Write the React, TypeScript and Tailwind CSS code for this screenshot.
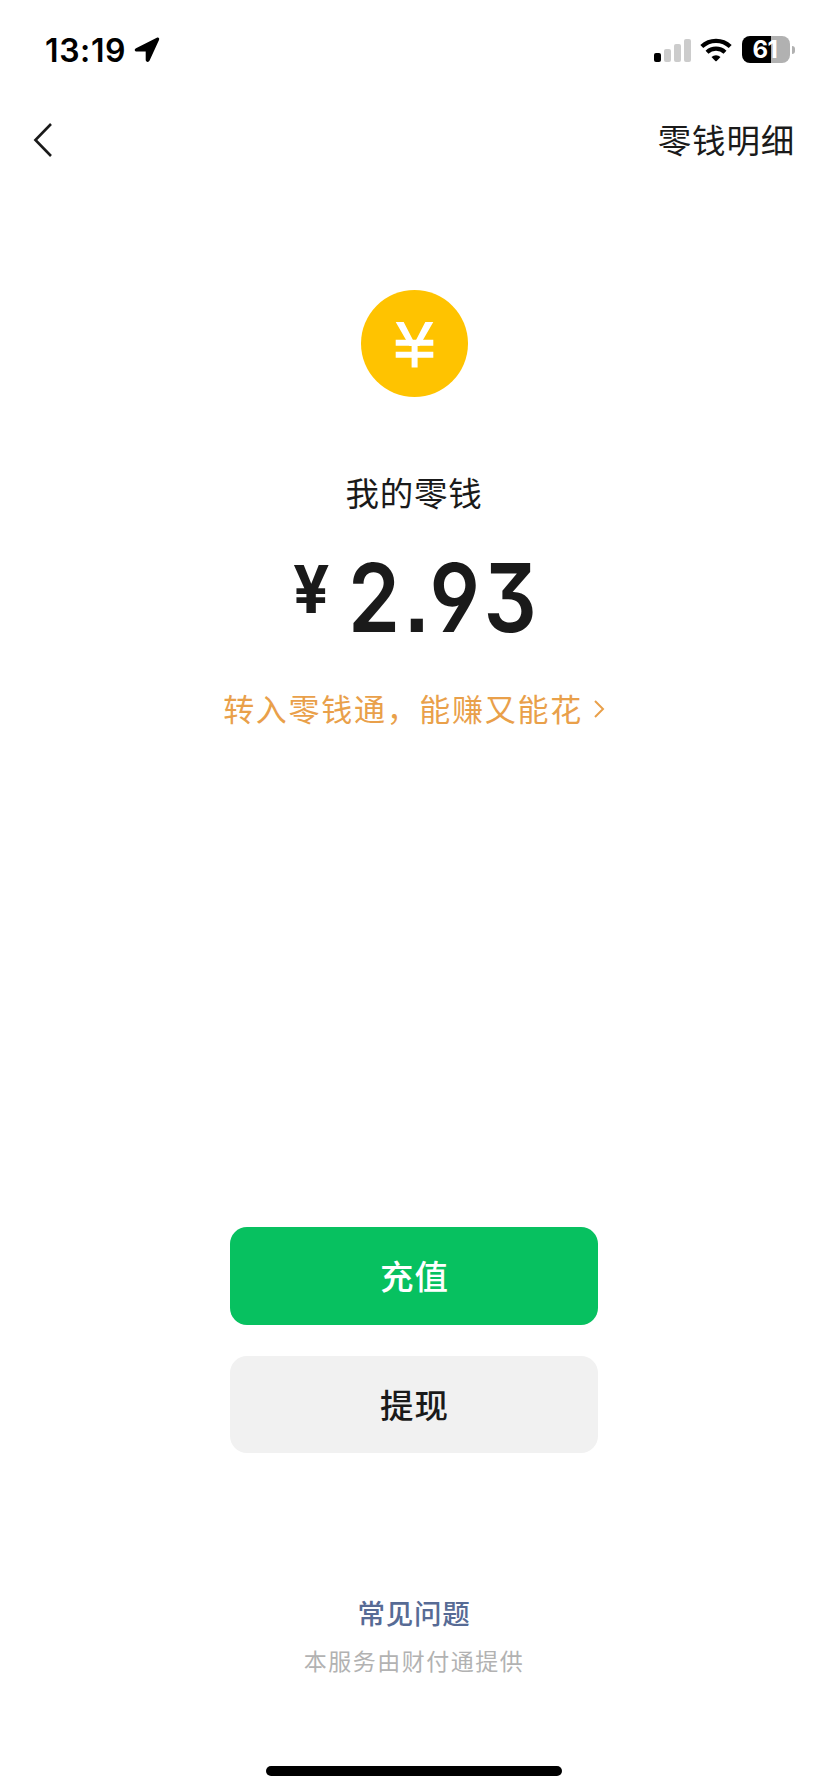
import React from 'react';

function LocationIcon() {
  return (
    <svg width="26" height="26" viewBox="0 0 26 26" className="ml-[8px]">
      <path
        d="M2 11.2 22.8 0.8 C24.5 0 25.8 1.2 25 3 L15.6 23.6 C14.7 25.6 11.7 25.2 11.7 22.8 V14.6 H3 C0.4 14.6 0 12.2 2 11.2 Z"
        fill="black"
      />
    </svg>
  );
}

function WifiIcon() {
  return (
    <svg width="32" height="24" viewBox="0 0 32 24" className="ml-[9px]">
      <g fill="none" stroke="black" strokeWidth="4.2">
        <path d="M1.8 8.6 A20.4 20.4 0 0 1 30.2 8.6" />
        <path d="M7 14.3 A13 13 0 0 1 25 14.3" />
      </g>
      <path d="M11.5 19 A6.6 6.6 0 0 1 20.5 19 L16.7 23 Q16 23.6 15.3 23 Z" fill="black" />
    </svg>
  );
}

function Battery() {
  return (
    <div className="ml-[10px] flex items-center">
      <div className="flex h-[27px] w-12 items-center justify-center rounded-[8px] bg-[linear-gradient(to_right,black_60.5%,#b1b1b1_60.5%)] font-['Inter',sans-serif] text-[24px] font-bold leading-none tracking-[-0.5px] text-white">
        <span className="-ml-[2px] mt-px">61</span>
      </div>
      <div className="ml-[2px] h-2 w-[3px] rounded-r-full bg-[#b1b1b1]" />
    </div>
  );
}

function StatusBar() {
  return (
    <div className="flex h-[99px] items-center justify-between pl-[45px] pr-[33px]">
      <div className="flex items-center">
        <span className="mt-[2px] font-['Inter',sans-serif] text-[32px] font-semibold leading-none tracking-[0.6px]">13:19</span>
        <LocationIcon />
      </div>
      <div className="flex items-center">
        <div className="mt-px flex h-[23px] items-end gap-[3px]">
          <div className="h-[9px] w-[7px] rounded-[2px] bg-black" />
          <div className="h-[13px] w-[7px] rounded-[2px] bg-[#cccccc]" />
          <div className="h-[18px] w-[7px] rounded-[2px] bg-[#cccccc]" />
          <div className="h-[23px] w-[7px] rounded-[2px] bg-[#cccccc]" />
        </div>
        <WifiIcon />
        <Battery />
      </div>
    </div>
  );
}

function NavBar() {
  return (
    <header className="flex h-[81px] items-center justify-between pl-[33px] pr-[33px]">
      <button aria-label="返回">
        <svg width="20" height="36" viewBox="0 0 20 36" fill="none" stroke="#1a1a1a" strokeWidth="2.6">
          <path d="M18 2 2.4 18 18 34" />
        </svg>
      </button>
      <button className="-mt-px text-[33.5px] leading-none tracking-[0.8px]">零钱明细</button>
    </header>
  );
}

function YuanCoin() {
  return (
    <svg width="107" height="107" viewBox="0 0 107 107">
      <circle cx="53.5" cy="53.5" r="53.5" fill="#ffc300" />
      <path d="M34.7 32 H42.7 L53.5 53 64.3 32 H72.3 L58.5 56 H48.5 Z" fill="white" />
      <g fill="none" stroke="white" strokeWidth="6">
        <path d="M34.7 52.7 H72.3 M34.7 64.7 H72.3" />
        <path d="M53.6 50 V77.5" />
      </g>
    </svg>
  );
}

function App() {
  return (
    <div className="flex h-[1792px] w-[828px] flex-col bg-white font-['Noto_Sans_CJK_SC',sans-serif] text-[#1a1a1a]">
      <div className="text-black">
        <StatusBar />
      </div>
      <NavBar />

      <main className="flex flex-col items-center pt-[110px]">
        <YuanCoin />
        <h1 className="mt-[75px] text-[33.5px] leading-10 tracking-[0.8px]">我的零钱</h1>

        <div className="mt-[49px] flex h-[72px] w-[242px] justify-between font-['Inter',sans-serif] font-semibold leading-none">
          <span className="mt-[-5px] w-9 origin-left scale-x-[.97] text-[66px] font-bold">¥</span>
          <span className="mt-[-11px] w-[187px] origin-left scale-x-[.88] text-[95px] tracking-[4px] [font-feature-settings:'cv04','cv09','ss07']">
            2.93
          </span>
        </div>

        <button className="mt-[55px] flex items-center text-[31px] leading-10 tracking-[1.7px] text-[#e9a04a]">
          转入零钱通，能赚又能花
          <svg width="12" height="18" viewBox="0 0 12 18" fill="none" stroke="#e9a04a" strokeWidth="2" className="ml-[10px] mt-px">
            <path d="M2 1 10 9 2 17" />
          </svg>
        </button>
      </main>

      <div className="mt-[499px] flex flex-col items-center gap-[31px] text-[33.5px] font-medium tracking-[1px]">
        <button className="h-[98px] w-[368px] rounded-[17px] bg-[#07c160] pb-px pl-px text-white">充值</button>
        <button className="h-[97px] w-[368px] rounded-[17px] bg-[#f1f1f1] pb-px pl-px">提现</button>
      </div>

      <footer className="mt-[139px] flex flex-col items-center">
        <a className="text-[27.5px] font-medium leading-10 tracking-[0.8px] text-[#576b95]">常见问题</a>
        <p className="mt-2 text-[23px] leading-10 tracking-[1.5px] text-[#b2b2b2]">本服务由财付通提供</p>
      </footer>

      <div className="mx-auto mb-4 mt-auto h-[10px] w-[296px] rounded-full bg-black" />
    </div>
  );
}

export default App;
